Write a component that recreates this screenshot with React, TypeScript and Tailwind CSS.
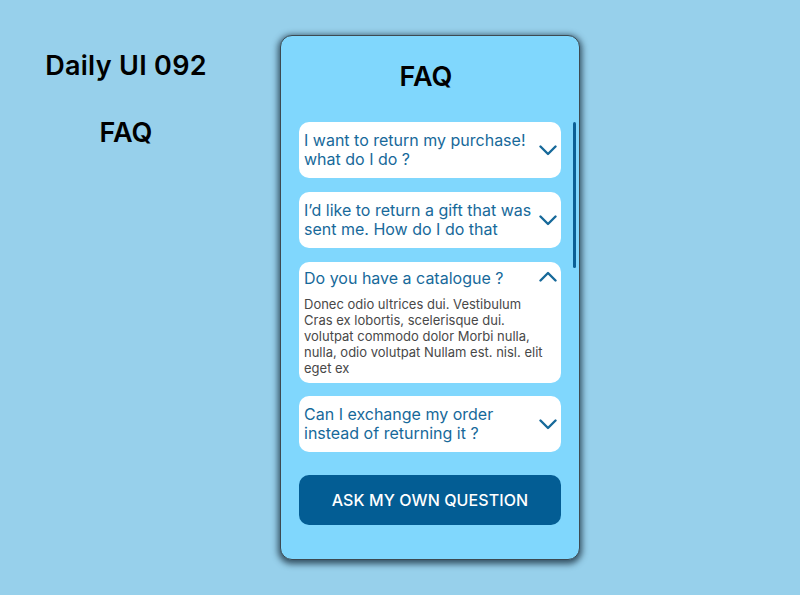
import React from "react";

const Chevron = ({ up = false }: { up?: boolean }) => (
  <svg width="18" height="11" viewBox="0 0 18 11" fill="none" className="shrink-0">
    {up ? (
      <path d="M1.5 9.5 L9 2 L16.5 9.5" stroke="#17699a" strokeWidth="2.4" strokeLinecap="round" strokeLinejoin="round" />
    ) : (
      <path d="M1.5 1.5 L9 9 L16.5 1.5" stroke="#17699a" strokeWidth="2.4" strokeLinecap="round" strokeLinejoin="round" />
    )}
  </svg>
);

export default function App() {
  const font = { fontFamily: "Inter, 'Noto Sans', sans-serif" };
  return (
    <div className="w-[800px] h-[595px] bg-[#97d0eb] flex overflow-hidden" style={font}>
      <div className="w-[252px] flex flex-col items-center pt-[49px] text-black">
        <div className="text-[27px] font-semibold leading-[34px] tracking-[0.3px]">Daily UI 092</div>
        <div className="text-[27px] font-semibold leading-[34px] mt-[33px]">FAQ</div>
      </div>
      <div className="ml-[28px] mt-[35px] w-[300px] h-[525px] rounded-[12px] bg-[#80d7fd] border border-[#3c4a52] shadow-[0_2px_6px_2px_rgba(20,40,55,0.75)] flex">
        <div className="flex-1 flex flex-col pl-[18px] pr-[12px]">
          <div className="text-center text-[27px] font-semibold text-black leading-[32px] mt-[25px] mr-[8px]">FAQ</div>
          <div className="flex flex-col gap-[14px] mt-[29px]">
            <div className="bg-white rounded-[10px] h-[56px] pl-[5px] pr-[4px] flex items-center justify-between">
              <div className="text-[16px] leading-[19px] text-[#17699a]">I want to return my purchase!<br />what do I do ?</div>
              <Chevron />
            </div>
            <div className="bg-white rounded-[10px] h-[56px] pl-[5px] pr-[4px] flex items-center justify-between">
              <div className="text-[16px] leading-[19px] text-[#17699a]">I’d like to return a gift that was<br />sent me. How do I do that</div>
              <Chevron />
            </div>
            <div className="bg-white rounded-[10px] h-[121px] pl-[5px] pr-[4px] pt-[7px] flex flex-col">
              <div className="flex justify-between items-start">
                <div className="text-[16px] leading-[19px] text-[#17699a]">Do you have a catalogue ?</div>
                <div className="mt-[2px]"><Chevron up /></div>
              </div>
              <div className="mt-[8px] text-[13px] leading-[16px] text-[#484848]">
                Donec odio ultrices dui. Vestibulum<br />Cras ex lobortis, scelerisque dui.<br />volutpat commodo dolor Morbi nulla,<br />nulla, odio volutpat Nullam est. nisl. elit<br />eget ex
              </div>
            </div>
            <div className="bg-white rounded-[10px] h-[56px] pl-[5px] pr-[4px] flex items-center justify-between -mt-[1px]">
              <div className="text-[16px] leading-[19px] text-[#17699a]">Can I exchange my order<br />instead of returning it ?</div>
              <Chevron />
            </div>
          </div>
          <button className="mt-[23px] h-[50px] rounded-[10px] bg-[#035d94] text-white text-[16px] font-medium tracking-[0.1px]">
            ASK MY OWN QUESTION
          </button>
        </div>
        <div className="w-[4px] mr-[2px] flex flex-col pt-[86px]">
          <div className="w-[3px] h-[146px] rounded-full bg-[#0a5f95]" />
        </div>
      </div>
    </div>
  );
}
